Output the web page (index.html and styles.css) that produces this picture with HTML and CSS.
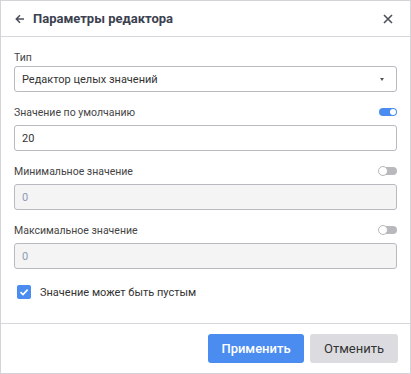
FILE: index.html
```html
<!DOCTYPE html>
<html lang="ru">
<head>
  <meta charset="UTF-8">
  <meta name="viewport" content="width=device-width, initial-scale=1.0">
  <title>Параметры редактора</title>
  <link rel="stylesheet" href="styles.css">
</head>
<body>

  <div class="dialog">
    <div class="header">
      <span class="back">
        <svg width="10" height="10" viewBox="0 0 10 10"><path d="M9 5H1.5M5 1.3L1.3 5 5 8.7" fill="none" stroke="#4a4f5a" stroke-width="1.5"/></svg>
      </span>
      <h2 class="title">Параметры редактора</h2>
      <span class="close">
        <svg width="10" height="10" viewBox="0 0 10 10"><path d="M1 1L9 9M9 1L1 9" stroke="#4a4f5a" stroke-width="1.6"/></svg>
      </span>
    </div>

    <div class="body">
      <div class="field">
        <div class="label-row plain"><label>Тип</label></div>
        <div class="input select">
          <span>Редактор целых значений</span>
          <span class="caret"></span>
        </div>
      </div>

      <div class="field">
        <div class="label-row"><label>Значение по умолчанию</label><span class="toggle on"></span></div>
        <div class="input">20</div>
      </div>

      <div class="field">
        <div class="label-row"><label>Минимальное значение</label><span class="toggle"></span></div>
        <div class="input disabled">0</div>
      </div>

      <div class="field">
        <div class="label-row"><label>Максимальное значение</label><span class="toggle"></span></div>
        <div class="input disabled">0</div>
      </div>

      <div class="check-row">
        <span class="checkbox">
          <svg width="10" height="10" viewBox="0 0 10 10"><path d="M1.5 5.2L4 7.6 8.6 2.6" fill="none" stroke="#fff" stroke-width="1.6"/></svg>
        </span>
        <span>Значение может быть пустым</span>
      </div>
    </div>

    <div class="footer">
      <button class="btn primary">Применить</button>
      <button class="btn secondary">Отменить</button>
    </div>
  </div>

</body>
</html>
```

FILE: styles.css
```css
* {
  margin: 0;
  padding: 0;
  box-sizing: border-box;
  font-family: Roboto, "Liberation Sans", Arial, sans-serif;
}

body {
  background: #fff;
}

.dialog {
  width: 411px;
  height: 374px;
  border: 1px solid #d3d3d8;
  display: flex;
  flex-direction: column;
  background: #fff;
}

.header {
  height: 36px;
  display: flex;
  align-items: center;
  padding: 0 17px 0 14px;
  border-bottom: 1px solid #d8d8dc;
}

.header .back {
  display: flex;
  width: 10px;
  margin-right: 8px;
}

.header .title {
  flex-grow: 1;
  font-size: 13px;
  font-weight: 700;
  color: #3b4150;
}

.header .close {
  display: flex;
}

.body {
  flex-grow: 1;
  padding: 12px 13px 0 13px;
  display: flex;
  flex-direction: column;
  gap: 10px;
}

.label-row {
  height: 20px;
  display: flex;
  align-items: center;
  justify-content: space-between;
  margin-bottom: 3px;
}

.label-row.plain {
  height: 16px;
  margin-bottom: 1px;
}

.label-row label {
  font-size: 10.5px;
  color: #444;
}

.input {
  height: 26px;
  border: 1px solid #b9b9c0;
  border-radius: 3px;
  padding: 0 7px;
  display: flex;
  align-items: center;
  font-size: 11px;
  color: #333;
}

.input.select {
  justify-content: space-between;
  padding-right: 12px;
}

.input.select .caret {
  width: 0;
  height: 0;
  border-left: 2.5px solid transparent;
  border-right: 2.5px solid transparent;
  border-top: 3px solid #555;
}

.input.disabled {
  background: #f4f4f5;
  color: #8d9bb6;
}

.toggle {
  position: relative;
  width: 18px;
  height: 8px;
  border-radius: 4px;
  background: #b8b8bd;
}

.toggle::after {
  content: "";
  position: absolute;
  top: -1px;
  left: -1px;
  width: 8px;
  height: 8px;
  border-radius: 50%;
  background: #fff;
  border: 1px solid #b8b8bd;
}

.toggle.on {
  background: #4a8cf0;
}

.toggle.on::after {
  top: 1px;
  left: 11px;
  width: 6px;
  height: 6px;
  border: none;
}

.check-row {
  display: flex;
  align-items: center;
  gap: 9px;
  height: 20px;
  margin-top: 3px;
  padding-left: 3px;
  font-size: 11px;
  color: #333;
}

.checkbox {
  width: 14px;
  height: 14px;
  border-radius: 2px;
  background: #4a8cf0;
  display: flex;
  align-items: center;
  justify-content: center;
}

.footer {
  border-top: 1px solid #d8d8dc;
  padding: 10px 12px 10px 0;
  display: flex;
  justify-content: flex-end;
  gap: 6px;
}

.btn {
  height: 29px;
  border: none;
  border-radius: 3px;
  font-size: 13px;
  cursor: pointer;
}

.btn.primary {
  width: 96px;
  background: #4a8cf0;
  color: #fff;
  font-weight: 500;
}

.btn.secondary {
  width: 88px;
  background: #dcdce0;
  color: #333;
}
```
